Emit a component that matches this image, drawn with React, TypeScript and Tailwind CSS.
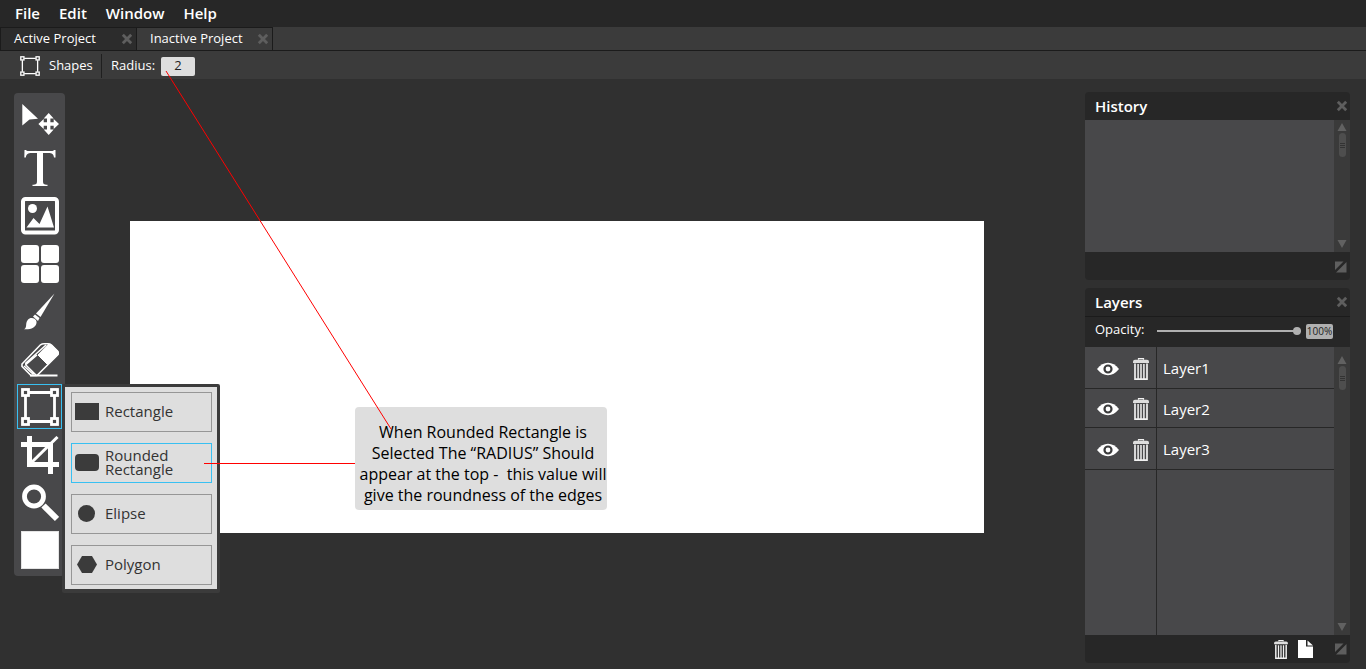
import { useState, type ReactNode } from "react";

function CloseIcon() {
  return (
    <svg viewBox="0 0 12 12" className="size-3" aria-hidden="true">
      <path d="M1.8 1.8L10.2 10.2M10.2 1.8L1.8 10.2" stroke="#5e5e5e" strokeWidth="2.8" />
    </svg>
  );
}

function MoveIcon() {
  return (
    <svg viewBox="0 0 38 34" className="h-[34px] w-[38px]" fill="#fff" aria-hidden="true">
      <path d="M1.300 1L17 15.700L8.500 16.500L1.300 22.500Z" />
      <path d="M27.700 10l5 5.500h-3.300v3.800h3.300v-3.300l5.300 5l-5.300 5v-3.300h-3.300v3.800h3.300l-5 5.500l-5-5.500H26v-3.800h-3.300V26l-5.300-5l5.300-5v3.300H26v-3.800h-3.300z" />
    </svg>
  );
}

function TextIcon() {
  return (
    <svg viewBox="0 0 38 38" className="size-[38px]" fill="#fff" aria-hidden="true">
      <path d="M3.500 1h1.500c.5.800 1 1 2.500 1h23c1.500 0 2-.2 2.500-1H34.500v7.500h-1.500C32.500 5 31 4 27.500 4H22v28c0 3 .8 3.500 4.500 3.800V37h-15v-1.200c3.700-.3 4.500-.8 4.500-3.800V4h-5.500C7 4 5.500 5 4.800 8.500H3.300z" />
    </svg>
  );
}

function ImageIcon() {
  return (
    <svg viewBox="0 0 38 38" className="size-[38px]" aria-hidden="true">
      <rect x="2" y="2" width="34" height="33.500" rx="2.500" fill="none" stroke="#fff" strokeWidth="4" />
      <circle cx="11.500" cy="11.500" r="4.500" fill="#fff" />
      <path d="M5.500 30.500L12.500 21l6 6L26.500 9.500L33 30.500z" fill="#fff" />
    </svg>
  );
}

function GridIcon() {
  return (
    <svg viewBox="0 0 38 38" className="size-[38px]" fill="#fff" aria-hidden="true">
      <rect x="0" y="0" width="18" height="18" rx="3" />
      <rect x="20" y="0" width="18" height="18" rx="3" />
      <rect x="0" y="20" width="18" height="18" rx="3" />
      <rect x="20" y="20" width="18" height="18" rx="3" />
    </svg>
  );
}

function BrushIcon() {
  return (
    <svg viewBox="0 0 38 38" className="size-[38px]" fill="#fff" aria-hidden="true">
      <path d="M33.500 .5L19.500 24L15 20.500z" />
      <path d="M14 21.500l4.500 3.500l-1.500 3l-5-4.500z" />
      <path d="M11 25c3 .5 5 2.300 4.500 5c-.8 4.500-5.500 6.800-12.500 6.300c2-1 2-2.500 2.200-5c.3-3.800 2.700-6.600 5.800-6.300z" />
    </svg>
  );
}

function EraserIcon() {
  return (
    <svg viewBox="0 0 38 34" className="h-[34px] w-[38px]" fill="none" stroke="#fff" aria-hidden="true">
      <path d="M19.500 1.800Q21 .8 23 .8H27Q29 .8 30.500 2L36.500 8Q38 9.800 37 11.500L16 32.500H10L1 23.500V21z" strokeWidth="1.600" />
      <path d="M17 12L27 1.500Q29 1 30.500 2L36.500 8Q38 9.800 37 11.500L26.500 21.500z" fill="#fff" />
      <path d="M15 32L4.800 22V20L25 2M12.500 31.500L3 23M16 12L5 21.500" strokeWidth="1.500" />
      <path d="M9 32.500H36.500" strokeWidth="2" />
    </svg>
  );
}

function ShapesIcon({ className, line }: { className: string; line: string }) {
  const corners = [
    [1.500, 1.500],
    [30.500, 1.500],
    [1.500, 30.500],
    [30.500, 30.500],
  ];
  return (
    <svg viewBox="0 0 38 38" className={className} fill="none" stroke="#fff" strokeWidth={line} aria-hidden="true">
      <path d="M8 4.500H30M8 33.500H30M4.500 8V30M33.500 8V30" />
      {corners.map(([x, y]) => (
        <rect key={`${x}-${y}`} x={x} y={y} width="6" height="6" />
      ))}
    </svg>
  );
}

function CropIcon() {
  return (
    <svg viewBox="0 0 38 38" className="size-[38px]" fill="none" stroke="#fff" aria-hidden="true">
      <path d="M8.500 0V28.500H38M0 8.500H29.500V38" strokeWidth="5" />
      <path d="M9 28L36.500 1" strokeWidth="3" />
    </svg>
  );
}

function ZoomIcon() {
  return (
    <svg viewBox="0 0 38 38" className="size-[38px]" fill="none" stroke="#fff" aria-hidden="true">
      <circle cx="13" cy="12.500" r="9.500" strokeWidth="4.800" />
      <path d="M22.500 21.500L36 35" strokeWidth="6" />
    </svg>
  );
}

function EyeIcon() {
  return (
    <svg viewBox="0 0 22 14" className="h-3.5 w-[22px]" aria-hidden="true">
      <path d="M0 7Q5 .8 11 .8T22 7Q17 13.200 11 13.200T0 7z" fill="#fff" />
      <circle cx="11" cy="7" r="3.500" fill="none" stroke="#3c3c3d" strokeWidth="2.200" />
    </svg>
  );
}

function TrashIcon({ className }: { className: string }) {
  return (
    <svg viewBox="0 0 16 22" className={className} fill="none" stroke="#f1f1f1" aria-hidden="true">
      <path d="M5.500 1.700V.7h5v1" strokeWidth="1.200" />
      <path d="M0 3.500Q0 1.700 2 1.700H14Q16 1.700 16 3.500V5H0z" fill="#dedede" stroke="none" />
      <path d="M2 5.500V21.200H14V5.500" strokeWidth="1.700" />
      <path d="M5.100 6V21M8 6V21M10.900 6V21" strokeWidth="1.500" />
    </svg>
  );
}

function ResizeIcon() {
  return (
    <svg viewBox="0 0 12 12" className="size-3" fill="#5e5e5e" aria-hidden="true">
      <path d="M0 .5H8.500L0 9zM11.500 1V11.500H1z" />
    </svg>
  );
}

function Scrollbar({ top }: { top: string }) {
  return (
    <div className={`flex w-4 flex-col items-center justify-between bg-[#3a3a3a] pb-1 ${top}`}>
      <div className="flex flex-col items-center gap-0.5">
        <svg viewBox="0 0 10 8" className="h-2 w-2.5" fill="#616161" aria-hidden="true">
          <path d="M5 0L9.500 8H.5z" />
        </svg>
        <div className="flex h-6 w-[7px] flex-col items-center justify-center gap-px rounded-full bg-[#4e4e4e]">
          <span className="h-px w-[5px] bg-[#333]" />
          <span className="h-px w-[5px] bg-[#333]" />
          <span className="h-px w-[5px] bg-[#333]" />
        </div>
      </div>
      <svg viewBox="0 0 10 8" className="h-2 w-2.5" fill="#616161" aria-hidden="true">
        <path d="M.5 0H9.500L5 8z" />
      </svg>
    </div>
  );
}

function PanelTitle({ title }: { title: string }) {
  return (
    <div className="flex h-7 items-center justify-between pr-0.5 pl-2.5">
      <h2 className="text-[15px] font-semibold">{title}</h2>
      <button type="button" aria-label={`Close ${title}`}>
        <CloseIcon />
      </button>
    </div>
  );
}

function Tool({ label, children }: { label: string; children: ReactNode }) {
  return (
    <button type="button" aria-label={label} className="flex h-12 w-full items-center justify-center">
      {children}
    </button>
  );
}

const shapes = [
  { name: "Rectangle", icon: <rect x="0" y="4" width="24" height="17" /> },
  { name: "Rounded Rectangle", icon: <rect x="0" y="4" width="24" height="17" rx="4" /> },
  { name: "Elipse", icon: <circle cx="11.500" cy="12.500" r="8.500" /> },
  { name: "Polygon", icon: <path d="M7 4H17L22 12.500L17 21H7L2 12.500z" /> },
];

const layers = [
  { name: "Layer1", height: "h-[42px]" },
  { name: "Layer2", height: "h-[39px]" },
  { name: "Layer3", height: "h-[42px]" },
];

export default function App() {
  const [radius, setRadius] = useState("2");
  const [shape, setShape] = useState("Rounded Rectangle");
  const [opacity, setOpacity] = useState(100);

  return (
    <div className="flex min-h-screen flex-col bg-[#303030] font-['Open_Sans','Noto_Sans',sans-serif] text-white">
      <nav className="flex h-[27px] items-center gap-[19px] bg-[#272727] px-[15px] text-[15px] font-semibold">
        <button type="button">File</button>
        <button type="button">Edit</button>
        <button type="button">Window</button>
        <button type="button">Help</button>
      </nav>

      <div className="flex h-[23px] bg-[#3b3b3b] text-[13px]">
        <div className="flex w-[137px] items-center justify-between border border-b-0 border-[#1b1b1b] bg-[#2c2c2c] pr-[3px] pl-[13px]">
          <a href="#active">Active Project</a>
          <button type="button" aria-label="Close Active Project">
            <CloseIcon />
          </button>
        </div>
        <div className="flex w-[136px] items-center justify-between border border-b-0 border-l-0 border-[#1b1b1b] pr-[3px] pl-[13px]">
          <a href="#inactive">Inactive Project</a>
          <button type="button" aria-label="Close Inactive Project">
            <CloseIcon />
          </button>
        </div>
      </div>

      <div className="flex h-[29px] items-center border-t border-[#1b1b1b] bg-[#3b3b3b] pt-0.5 pl-5 text-[13px]">
        <ShapesIcon className="size-5" line="2.5" />
        <span className="ml-[9px] w-[52px]">Shapes</span>
        <span className="h-6 w-px bg-[#1f1f1f]" />
        <label htmlFor="radius" className="ml-[9px] w-[50px]">
          Radius:
        </label>
        <input
          id="radius"
          value={radius}
          onChange={(e) => setRadius(e.target.value)}
          className="h-[19px] w-[34px] rounded-xs bg-[#dedede] text-center text-[#222]"
        />
      </div>

      <main className="flex flex-1 items-start px-3.5 pt-[13px]">
        <aside className="relative z-10 mt-px flex w-[51px] shrink-0 flex-col rounded-sm bg-[#48484a] px-[3px] pt-[3px] pb-1">
          <Tool label="Move">
            <MoveIcon />
          </Tool>
          <Tool label="Text">
            <TextIcon />
          </Tool>
          <Tool label="Image">
            <ImageIcon />
          </Tool>
          <Tool label="Grid">
            <GridIcon />
          </Tool>
          <Tool label="Brush">
            <BrushIcon />
          </Tool>
          <Tool label="Eraser">
            <EraserIcon />
          </Tool>
          <div className="relative pb-0.5">
            <button
              type="button"
              aria-label="Shapes"
              className="flex h-[45px] w-full items-center justify-center border border-[#38c0f2]"
            >
              <ShapesIcon className="size-[38px]" line="2.8" />
            </button>
            <div className="absolute top-0 left-[45px] flex w-[158px] flex-col gap-[11px] rounded-xs border-[3px] border-b-4 border-[#3b3b3b] bg-[#dedede] pt-[5px] pr-[5px] pb-1 pl-1.5">
              {shapes.map((s) => (
                <button
                  key={s.name}
                  type="button"
                  onClick={() => setShape(s.name)}
                  className={`flex h-10 items-center gap-1.5 border pb-0.5 pl-[3px] text-left text-[15px] leading-[14px] text-[#333] ${
                    shape === s.name ? "border-[#38c0f2]" : "border-[#969696]"
                  }`}
                >
                  <svg viewBox="0 0 24 25" className="h-[25px] w-6 shrink-0" fill="#3b3b3b" aria-hidden="true">
                    {s.icon}
                  </svg>
                  <span>{s.name}</span>
                </button>
              ))}
            </div>
          </div>
          <Tool label="Crop">
            <CropIcon />
          </Tool>
          <Tool label="Zoom">
            <ZoomIcon />
          </Tool>
          <div className="flex h-[45px] items-center justify-center">
            <input
              type="color"
              aria-label="Fill colour"
              defaultValue="#ffffff"
              className="size-[38px] appearance-none border border-[#e4e4e4] bg-white p-0 [&::-webkit-color-swatch]:border-0 [&::-webkit-color-swatch-wrapper]:p-0"
            />
          </div>
        </aside>

        <section aria-label="Canvas" className="relative mt-[129px] mr-[101px] ml-[65px] h-[312px] flex-1 bg-white">
          <p className="absolute top-[186px] left-[225px] h-[103px] w-[252px] rounded-sm bg-[#dedede] pt-[15px] pl-1 text-center text-[16px] leading-[21px] whitespace-pre text-black">
            {"When Rounded Rectangle is\nSelected The “RADIUS” Should\nappear at the top -  this value will\ngive the roundness of the edges"}
          </p>
          <svg
            viewBox="0 0 854 312"
            className="pointer-events-none absolute top-0 left-0 z-20 h-[312px] w-[854px] overflow-visible"
            stroke="#f00"
            aria-hidden="true"
          >
            <path d="M36 -150L261 208" />
            <path d="M74 242.500H225" />
          </svg>
        </section>

        <aside className="mr-0.5 flex w-[265px] shrink-0 flex-col gap-2">
          <section className="overflow-hidden rounded-sm bg-[#272727]">
            <PanelTitle title="History" />
            <div className="flex h-[132px]">
              <div className="flex-1 bg-[#48484a]" />
              <Scrollbar top="pt-[3px]" />
            </div>
            <div className="flex h-7 items-center justify-end pt-0.5 pr-[3px]">
              <ResizeIcon />
            </div>
          </section>

          <section className="overflow-hidden rounded-sm bg-[#272727]">
            <PanelTitle title="Layers" />
            <div className="flex h-[31px] items-center border-t border-[#1b1b1b] pb-0.5 pl-2.5">
              <label htmlFor="opacity" className="w-[62px] pb-0.5 text-[13px]">
                Opacity:
              </label>
              <input
                id="opacity"
                type="range"
                value={opacity}
                onChange={(e) => setOpacity(Number(e.target.value))}
                className="h-2 w-36 appearance-none bg-transparent [&::-webkit-slider-runnable-track]:h-0.5 [&::-webkit-slider-runnable-track]:bg-[#b0b0b0] [&::-webkit-slider-thumb]:-mt-[3px] [&::-webkit-slider-thumb]:size-2 [&::-webkit-slider-thumb]:appearance-none [&::-webkit-slider-thumb]:rounded-full [&::-webkit-slider-thumb]:bg-[#b0b0b0]"
              />
              <output
                htmlFor="opacity"
                className="ml-[5px] h-[15px] w-[27px] rounded-xs bg-[#b0b0b0] text-center text-[10px] leading-[15px] text-[#222]"
              >
                {opacity}%
              </output>
            </div>
            <div className="flex h-[288px]">
              <div className="flex flex-1 flex-col bg-[#48484a]">
                {layers.map(({ name, height }) => (
                  <div key={name} className={`flex border-b border-[#272727] ${height}`}>
                    <div className="flex w-[72px] items-center justify-between border-r border-[#272727] pt-0.5 pr-[7px] pl-3">
                      <button type="button" aria-label={`Show ${name}`}>
                        <EyeIcon />
                      </button>
                      <button type="button" aria-label={`Delete ${name}`}>
                        <TrashIcon className="h-[22px] w-4" />
                      </button>
                    </div>
                    <span className="flex items-center pt-0.5 pl-1.5 text-[15px]">{name}</span>
                  </div>
                ))}
                <div className="w-[72px] flex-1 border-r border-[#272727]" />
              </div>
              <Scrollbar top="pt-[9px]" />
            </div>
            <div className="flex h-7 items-center justify-end pr-[3px]">
              <button type="button" aria-label="Delete layer">
                <TrashIcon className="h-[19px] w-3.5" />
              </button>
              <button type="button" aria-label="New layer" className="ml-2.5">
                <svg viewBox="0 0 15 18" className="h-[18px] w-[15px]" fill="#fff" aria-hidden="true">
                  <path d="M0 0H8V6.500H15V18H0zM9.500 .5L15 5.500H9.500z" />
                </svg>
              </button>
              <span className="ml-[22px]">
                <ResizeIcon />
              </span>
            </div>
          </section>
        </aside>
      </main>
    </div>
  );
}
